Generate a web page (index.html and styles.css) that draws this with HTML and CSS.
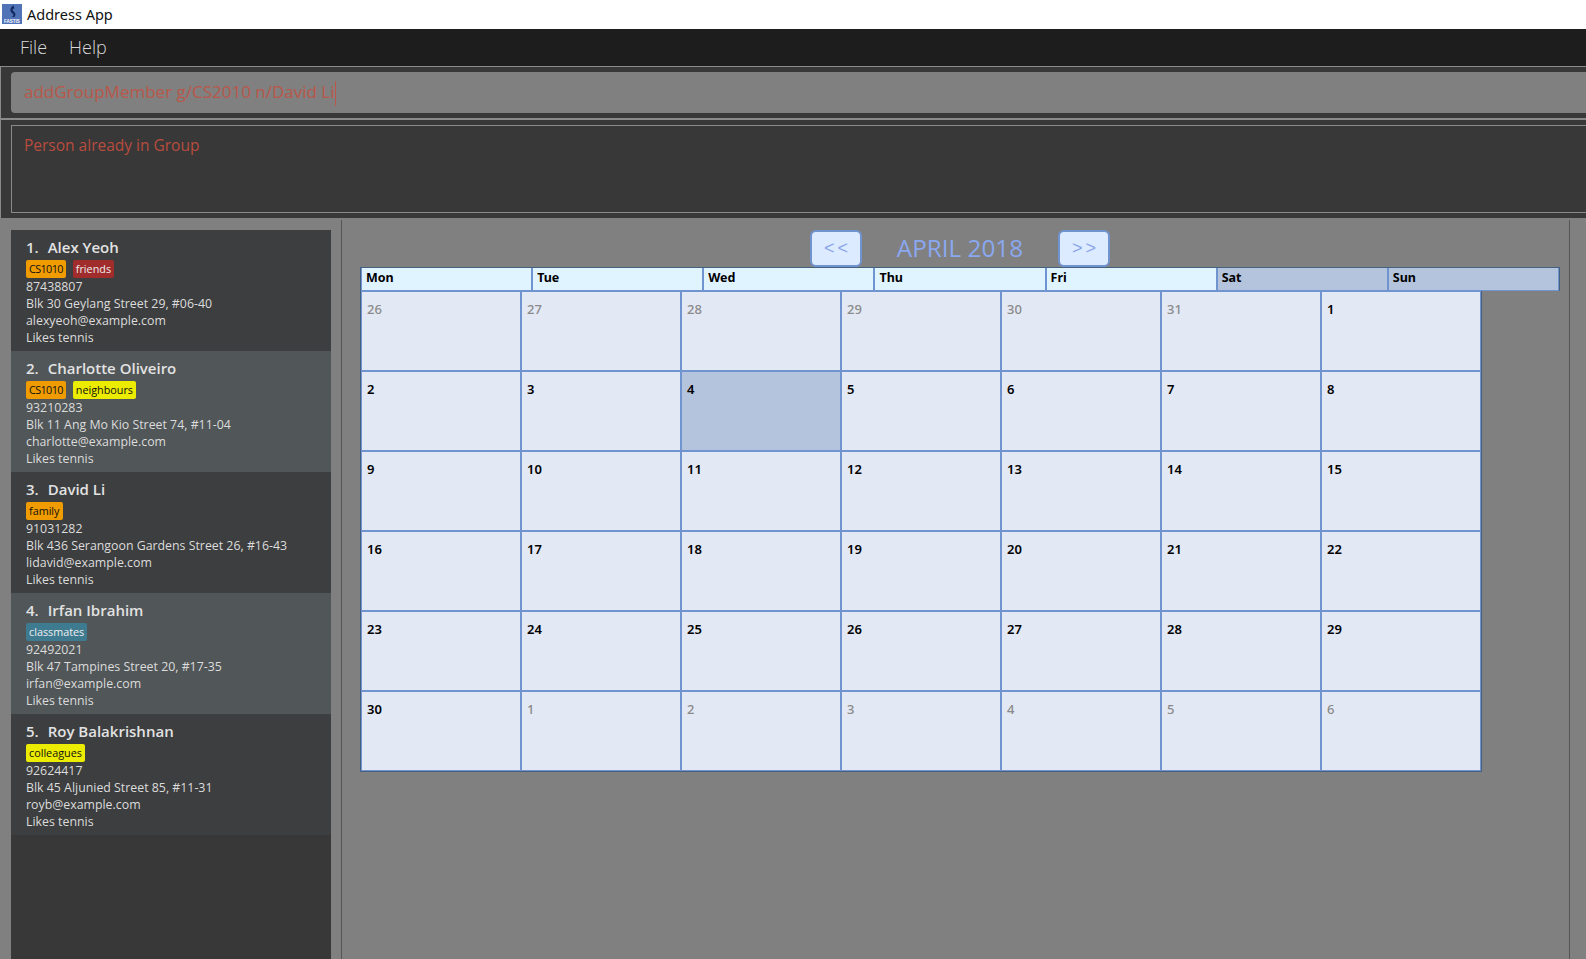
FILE: index.html
```html
<!DOCTYPE html>
<html lang="en">
<head>
  <meta charset="UTF-8" />
  <title>Address App</title>
  <link rel="stylesheet" href="styles.css">
</head>
<body>
  <div class="titlebar">
    <svg class="app-icon" viewBox="0 0 20 20" width="20" height="20">
      <rect width="20" height="20" fill="#5073b8"/>
      <path d="M11.500 1.500 C9 2.500 8 5 8.500 7 C9 9 11.500 9.500 11.500 11 C11.500 12 10.500 12.500 9.500 12 C11 14 13.500 13 13.500 10.500 C13.500 8.500 11 7.500 10.500 6 C10.500 5 11.500 4.500 12.500 4.500 Z" fill="#12275c"/>
      <text x="10" y="18.500" class="app-icon-text">FASTIS</text>
    </svg>
    <span>Address App</span>
  </div>

  <div class="menubar">
    <span>File</span>
    <span>Help</span>
  </div>

  <div class="command-pane">
    <div class="command-field">addGroupMember g/CS2010 n/David Li<span class="caret"></span></div>
  </div>

  <div class="result-pane">
    <div class="result-box">Person already in Group</div>
  </div>

  <div class="main">
    <div class="person-pane">
      <div class="person-list">
        <div class="card">
          <div class="name"><span class="num">1.</span>Alex Yeoh</div>
          <div class="tags"><span class="tag orange code">CS1010</span><span class="tag red">friends</span></div>
          <div class="line">87438807</div>
          <div class="line">Blk 30 Geylang Street 29, #06-40</div>
          <div class="line">alexyeoh@example.com</div>
          <div class="line">Likes tennis</div>
        </div>
        <div class="card alt">
          <div class="name"><span class="num">2.</span>Charlotte Oliveiro</div>
          <div class="tags"><span class="tag orange code">CS1010</span><span class="tag yellow">neighbours</span></div>
          <div class="line">93210283</div>
          <div class="line">Blk 11 Ang Mo Kio Street 74, #11-04</div>
          <div class="line">charlotte@example.com</div>
          <div class="line">Likes tennis</div>
        </div>
        <div class="card">
          <div class="name"><span class="num">3.</span>David Li</div>
          <div class="tags"><span class="tag orange">family</span></div>
          <div class="line">91031282</div>
          <div class="line">Blk 436 Serangoon Gardens Street 26, #16-43</div>
          <div class="line">lidavid@example.com</div>
          <div class="line">Likes tennis</div>
        </div>
        <div class="card alt">
          <div class="name"><span class="num">4.</span>Irfan Ibrahim</div>
          <div class="tags"><span class="tag teal">classmates</span></div>
          <div class="line">92492021</div>
          <div class="line">Blk 47 Tampines Street 20, #17-35</div>
          <div class="line">irfan@example.com</div>
          <div class="line">Likes tennis</div>
        </div>
        <div class="card">
          <div class="name"><span class="num">5.</span>Roy Balakrishnan</div>
          <div class="tags"><span class="tag yellow">colleagues</span></div>
          <div class="line">92624417</div>
          <div class="line">Blk 45 Aljunied Street 85, #11-31</div>
          <div class="line">royb@example.com</div>
          <div class="line">Likes tennis</div>
        </div>
      </div>
    </div>

    <div class="calendar-pane">
      <div class="cal-nav">
        <button class="nav-btn">&lt;&lt;</button>
        <div class="month">APRIL 2018</div>
        <button class="nav-btn">&gt;&gt;</button>
      </div>
      <div class="weekdays">
        <div class="wd">Mon</div>
        <div class="wd">Tue</div>
        <div class="wd">Wed</div>
        <div class="wd">Thu</div>
        <div class="wd">Fri</div>
        <div class="wd weekend">Sat</div>
        <div class="wd weekend">Sun</div>
      </div>
      <div class="days">
        <div class="day other">26</div><div class="day other">27</div><div class="day other">28</div><div class="day other">29</div><div class="day other">30</div><div class="day other">31</div><div class="day">1</div>
        <div class="day">2</div><div class="day">3</div><div class="day today">4</div><div class="day">5</div><div class="day">6</div><div class="day">7</div><div class="day">8</div>
        <div class="day">9</div><div class="day">10</div><div class="day">11</div><div class="day">12</div><div class="day">13</div><div class="day">14</div><div class="day">15</div>
        <div class="day">16</div><div class="day">17</div><div class="day">18</div><div class="day">19</div><div class="day">20</div><div class="day">21</div><div class="day">22</div>
        <div class="day">23</div><div class="day">24</div><div class="day">25</div><div class="day">26</div><div class="day">27</div><div class="day">28</div><div class="day">29</div>
        <div class="day">30</div><div class="day other">1</div><div class="day other">2</div><div class="day other">3</div><div class="day other">4</div><div class="day other">5</div><div class="day other">6</div>
      </div>
    </div>

    <div class="side-pane"></div>
  </div>
</body>
</html>
```

FILE: styles.css
```css
* {
  box-sizing: border-box;
}
html, body {
  height: 100%;
}
body {
  margin: 0;
  overflow: hidden;
  display: flex;
  flex-direction: column;
  background-color: #808080;
  font-family: "Open Sans", "Noto Sans", sans-serif;
}

.titlebar {
  height: 29px;
  flex: none;
  display: flex;
  align-items: center;
  gap: 5px;
  padding-left: 2px;
  padding-bottom: 1px;
  background-color: #fff;
  color: #111;
  font-size: 14.500px;
  font-family: "Noto Sans", sans-serif;
}
.app-icon-text {
  font-family: "Liberation Sans", sans-serif;
  font-size: 4.500px;
  font-weight: bold;
  fill: #fff;
  text-anchor: middle;
}

.menubar {
  height: 37px;
  flex: none;
  display: flex;
  align-items: center;
  gap: 22px;
  padding: 0 0 2px 20px;
  background-color: #1d1d1d;
  color: #d8d8d8;
  font-size: 18px;
  font-weight: 300;
}

.command-pane {
  height: 54px;
  flex: none;
  padding: 5px 0 5px 10px;
  background-color: #383838;
  border-top: 1px solid #8a8a8a;
  border-left: 1px solid #8a8a8a;
  border-bottom: 2px solid #8a8a8a;
}
.command-field {
  height: 41px;
  padding-left: 13px;
  border-radius: 4px 0 0 4px;
  background-color: #808080;
  color: #b9574a;
  font-size: 17px;
  line-height: 40px;
  white-space: nowrap;
}
.caret {
  display: inline-block;
  width: 1px;
  height: 25px;
  vertical-align: middle;
  background-color: #b9574a;
}

.result-pane {
  height: 98px;
  flex: none;
  padding: 5px 0 5px 10px;
  background-color: #383838;
  border-left: 1px solid #8a8a8a;
}
.result-box {
  height: 88px;
  padding: 8px 12px;
  border: 1px solid #8a8a8a;
  border-right: none;
  color: #b94c3e;
  font-size: 15.500px;
}

.main {
  flex: 1;
  display: flex;
  min-height: 0;
}

.person-pane {
  width: 341px;
  flex: none;
  padding: 12px 10px 0 11px;
}
.person-list {
  height: 100%;
  background-color: #383838;
}
.card {
  height: 121px;
  padding: 5px 15px 0;
  background-color: #3c3e3f;
  color: #dcdcdc;
}
.card.alt {
  background-color: #515658;
}
.name {
  height: 24px;
  font-size: 15px;
  font-weight: 600;
  line-height: 24px;
  color: #e2e2e2;
}
.num {
  margin-right: 9px;
}
.tags {
  display: flex;
  gap: 7px;
  height: 19px;
  padding-top: 1px;
}
.tag {
  height: 18px;
  padding: 0 3px;
  border-radius: 2px;
  font-size: 10.800px;
  line-height: 18px;
}
.tag.code {
  letter-spacing: -0.600px;
}
.tag.orange {
  background-color: #f09c00;
  color: #111;
}
.tag.red {
  background-color: #a02c2c;
  color: #eee;
}
.tag.yellow {
  background-color: #ecec00;
  color: #111;
}
.tag.teal {
  background-color: #3e7b91;
  color: #eee;
}
.line {
  height: 17px;
  font-size: 12.350px;
  line-height: 17px;
  white-space: nowrap;
}

.calendar-pane {
  width: 1228px;
  flex: none;
  padding: 10px 0 0 18px;
  border-left: 1px solid #555;
  margin-top: 2px;
}
.cal-nav {
  height: 37px;
  display: flex;
  padding-left: 450px;
}
.nav-btn {
  width: 52px;
  height: 37px;
  padding: 0 0 0 3px;
  border: 2px solid #7094d0;
  border-radius: 6px;
  background-color: #dcebff;
  color: #8aa4e8;
  font-family: "Liberation Sans", sans-serif;
  font-size: 18px;
  letter-spacing: 3px;
}
.month {
  width: 196px;
  text-align: center;
  color: #8aa8f0;
  font-size: 24.300px;
  line-height: 35px;
}

.weekdays {
  width: 1200px;
  height: 24px;
  display: grid;
  grid-template-columns: repeat(7, 1fr);
  background-color: #e0f4ff;
  border: 1px solid #46607f;
  border-bottom: 0;
}
.wd {
  height: 23px;
  padding-left: 4px;
  border-left: 1px solid #7094d0;
  border-right: 1px solid #7094d0;
  border-bottom: 1px solid #7094d0;
  color: #000;
  font-family: "Noto Sans", sans-serif;
  font-size: 12.500px;
  font-weight: 700;
  line-height: 20px;
}
.wd.weekend {
  background-color: #b4c4dc;
}

.days {
  width: 1122px;
  display: grid;
  grid-template-columns: repeat(7, 160px);
  border: 1px solid #46607f;
  border-top: 0;
}
.day {
  height: 80px;
  padding: 8px 5px;
  background-color: #e2e8f4;
  border: 1px solid #7094d0;
  color: #000;
  font-family: "Noto Sans", sans-serif;
  font-size: 13px;
  font-weight: 600;
}
.day.other {
  color: #8a8a8a;
  font-weight: 500;
}
.day.today {
  background-color: #b4c4dc;
}

.side-pane {
  flex: 1;
  margin-top: 2px;
  border-left: 1px solid #555;
}
```
